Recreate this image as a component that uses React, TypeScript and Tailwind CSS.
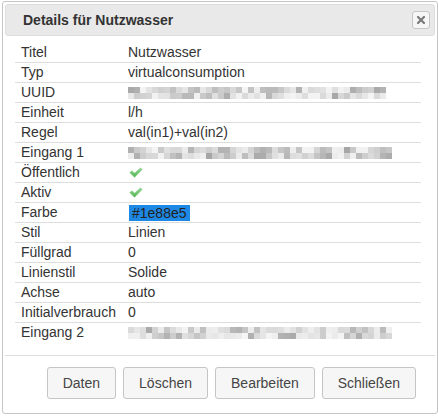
import { useMemo } from 'react';

type Row = { label: string; value: React.ReactNode };

function rng(seed: number) {
  let a = seed;
  return () => {
    a |= 0;
    a = (a + 0x6d2b79f5) | 0;
    let t = Math.imul(a ^ (a >>> 15), 1 | a);
    t = (t + Math.imul(t ^ (t >>> 7), 61 | t)) ^ t;
    return ((t ^ (t >>> 14)) >>> 0) / 4294967296;
  };
}

// pixelated "blurred" value, like the redacted ids in the screenshot
function Mosaic({ seed, cols, rows }: { seed: number; cols: number; rows: number }) {
  const cells = useMemo(() => {
    const r = rng(seed);
    const out: string[][] = [];
    for (let y = 0; y < rows; y++) {
      const line: string[] = [];
      for (let x = 0; x < cols; x++) {
        const v = Math.round(165 + Math.pow(r(), 0.7) * 80);
        line.push(`rgb(${v},${v},${v})`);
      }
      out.push(line);
    }
    return out;
  }, [seed, cols, rows]);

  return (
    <div className="flex flex-col">
      {cells.map((line, y) => (
        <div key={y} className="flex">
          {line.map((c, x) => (
            <span key={x} className="block w-[6px] h-[6px]" style={{ backgroundColor: c }} />
          ))}
        </div>
      ))}
    </div>
  );
}

function Check() {
  return (
    <svg width="14" height="11" viewBox="0 0 14 11" className="ml-[1px]">
      <defs>
        <linearGradient id="g" x1="0" y1="0" x2="0" y2="1">
          <stop offset="0" stopColor="#9ad89a" />
          <stop offset="1" stopColor="#52b552" />
        </linearGradient>
      </defs>
      <path d="M0.5 5.5 L3 3.5 L5.5 6 L11.5 0.5 L13.5 2.5 L5.5 10.5 Z" fill="url(#g)" />
    </svg>
  );
}

function CloseIcon() {
  return (
    <svg width="8" height="8" viewBox="0 0 8 8">
      <path d="M1 1 L7 7 M7 1 L1 7" stroke="#7a7a7a" strokeWidth="2.2" strokeLinecap="square" />
    </svg>
  );
}

const rows: Row[] = [
  { label: 'Titel', value: 'Nutzwasser' },
  { label: 'Typ', value: 'virtualconsumption' },
  { label: 'UUID', value: <Mosaic seed={7} cols={43} rows={2} /> },
  { label: 'Einheit', value: 'l/h' },
  { label: 'Regel', value: 'val(in1)+val(in2)' },
  { label: 'Eingang 1', value: <Mosaic seed={19} cols={44} rows={2} /> },
  { label: 'Öffentlich', value: <Check /> },
  { label: 'Aktiv', value: <Check /> },
  {
    label: 'Farbe',
    value: <span className="ml-[1px] px-[3px] bg-[#1e88e5] text-[#222] leading-[16px]">#1e88e5</span>,
  },
  { label: 'Stil', value: 'Linien' },
  { label: 'Füllgrad', value: '0' },
  { label: 'Linienstil', value: 'Solide' },
  { label: 'Achse', value: 'auto' },
  { label: 'Initialverbrauch', value: '0' },
  { label: 'Eingang 2', value: <Mosaic seed={33} cols={44} rows={2} /> },
];

const buttons = ['Daten', 'Löschen', 'Bearbeiten', 'Schließen'];

export default function App() {
  return (
    <div className="w-[438px] h-[417px] bg-white overflow-hidden font-['Liberation_Sans',Arial,sans-serif] text-[14px] text-[#333]">
      <div className="ml-[2px] mt-[1px] w-[436px] h-[413px] border border-[#c5c5c5] rounded-[3px] px-[2px] pt-[2px] flex flex-col">
        {/* titlebar */}
        <div className="h-[32px] border border-[#dddddd] bg-[#e9e9e9] rounded-[3px] flex items-center justify-between pl-[17px] pr-[4px]">
          <span className="font-bold text-[14px] text-[#333]">Details für Nutzwasser</span>
          <button className="w-[18px] h-[18px] border border-[#c5c5c5] bg-[#f6f6f6] rounded-[3px] flex items-center justify-center">
            <CloseIcon />
          </button>
        </div>

        {/* content */}
        <div className="pt-[7px] pl-[10px]">
          <div className="w-[406px]">
            {rows.map((r, i) => (
              <div
                key={r.label}
                className={
                  i === 0
                    ? 'flex items-center h-[19px] leading-[19px]'
                    : 'flex items-center h-[20px] leading-[19px] border-t border-[#dddddd]'
                }
              >
                <div className="w-[108px] pl-[6px] whitespace-nowrap">{r.label}</div>
                <div className="pl-[5px] flex items-center">{r.value}</div>
              </div>
            ))}
          </div>
        </div>

        {/* button pane */}
        <div className="mt-[13px] border-t border-[#dddddd] pt-[11px] pr-[19px] flex justify-end gap-[7px]">
          {buttons.map((b) => (
            <button
              key={b}
              className="h-[32px] px-[15px] border border-[#c5c5c5] bg-[#f6f6f6] rounded-[3px] text-[#454545] text-[14px]"
            >
              {b}
            </button>
          ))}
        </div>
      </div>
    </div>
  );
}
